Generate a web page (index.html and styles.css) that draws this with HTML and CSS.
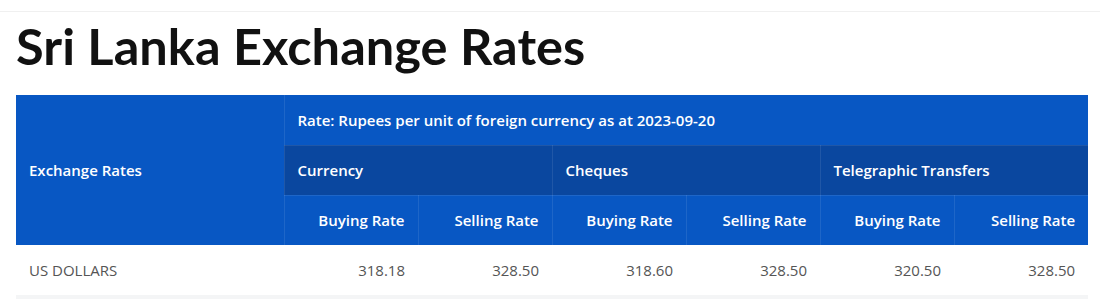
FILE: index.html
```html
<!DOCTYPE html>
<html lang="en">
<head>
<meta charset="utf-8">
<title>Sri Lanka Exchange Rates</title>
<link rel="stylesheet" href="styles.css">
</head>
<body>
<div class="topbar"></div>
<main class="page">
  <h1 class="title">Sri Lanka Exchange Rates</h1>
  <table class="rates">
    <colgroup>
      <col class="c-name">
      <col class="c-val"><col class="c-val"><col class="c-val">
      <col class="c-val"><col class="c-val"><col class="c-val">
    </colgroup>
    <thead>
      <tr>
        <th rowspan="3" class="h-main">Exchange Rates</th>
        <th colspan="6" class="h-note">Rate: Rupees per unit of foreign currency as at 2023-09-20</th>
      </tr>
      <tr class="h-group">
        <th colspan="2">Currency</th>
        <th colspan="2">Cheques</th>
        <th colspan="2">Telegraphic Transfers</th>
      </tr>
      <tr class="h-sub">
        <th>Buying Rate</th>
        <th>Selling Rate</th>
        <th>Buying Rate</th>
        <th>Selling Rate</th>
        <th>Buying Rate</th>
        <th>Selling Rate</th>
      </tr>
    </thead>
    <tbody>
      <tr>
        <td class="name">US DOLLARS</td>
        <td class="num">318.18</td>
        <td class="num">328.50</td>
        <td class="num">318.60</td>
        <td class="num">328.50</td>
        <td class="num">320.50</td>
        <td class="num">328.50</td>
      </tr>
    </tbody>
  </table>
  <div class="next-row"></div>
</main>
</body>
</html>
```

FILE: styles.css
```css
html, body {
  margin: 0;
  padding: 0;
  background: #ffffff;
}

body {
  font-family: "Open Sans", "Noto Sans", sans-serif;
  color: #222;
}

.topbar {
  height: 11px;
  border-bottom: 1px solid #f0f0f0;
}

.page {
  padding: 0 12px 0 16px;
}

.title {
  margin: 0;
  height: 83px;
  padding-top: 4px;
  box-sizing: border-box;
  font-family: "Lato", "Open Sans", sans-serif;
  font-size: 50.5px;
  line-height: 60px;
  font-weight: 700;
  color: #111;
  letter-spacing: 0.05px;
}

.rates {
  border-collapse: collapse;
  table-layout: fixed;
  width: 1072px;
}

.c-name { width: 268px; }
.c-val { width: 134px; }

.rates th {
  background: #0857c3;
  color: #ffffff;
  font-weight: 600;
  font-size: 15px;
  line-height: 20px;
  height: 50px;
  padding: 0 13px;
  box-sizing: border-box;
  text-align: left;
  border: 1px solid rgba(255, 255, 255, 0.09);
}

.rates th.h-main {
  border-left: 0;
  border-top: 0;
  border-bottom: 0;
}

.rates th.h-note {
  border-top: 0;
  border-right: 0;
}

.h-group th {
  background: #0a479f;
}

.h-group th:last-child,
.h-sub th:last-child {
  border-right: 0;
}

.h-sub th {
  text-align: right;
  border-bottom: 0;
}

.rates td {
  height: 50px;
  padding: 0 13px;
  box-sizing: border-box;
  font-size: 15px;
  line-height: 20px;
  color: #555;
  background: #fff;
  border: 0;
}

.rates td.num {
  text-align: right;
}

.next-row {
  width: 1072px;
  height: 10px;
  background: #f4f5f6;
}
```
